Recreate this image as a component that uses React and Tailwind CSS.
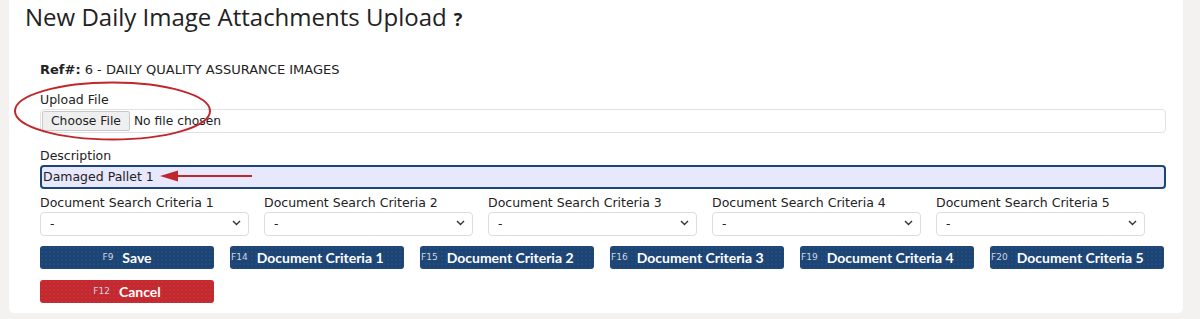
import React from "react";

const body = { fontFamily: '"DejaVu Sans", Verdana, sans-serif' };

function Btn({ fk, label, red, center }) {
  return (
    <button
      className={
        "h-[23px] w-[174px] rounded-[3px] flex items-center text-white font-bold text-[14px] bg-[radial-gradient(rgba(255,255,255,0.08)_0.6px,transparent_0.8px)] bg-[length:4px_4px] " +
        (red ? "bg-[#c4292f] justify-center" : "bg-[#1c4475] ") +
        (center ? " justify-center" : " pl-[1px]")
      }
      style={{ fontFamily: 'Lato, sans-serif' }}
    >
      <span className="text-[9px] font-normal mr-[9px] text-[#cfd6e0]" style={body}>{fk}</span>
      <span>{label}</span>
    </button>
  );
}

function Sel({ n }) {
  return (
    <div className="flex flex-col">
      <div className="text-[12.5px] leading-[15px] text-[#222] mb-[1px]">Document Search Criteria {n}</div>
      <div className="relative w-[209px]">
        <select className="appearance-none w-full h-[24px] rounded-[4px] border border-[#dcdcdc] bg-white pl-[9px] text-[12px] text-[#222] outline-none" style={body}>
          <option>-</option>
        </select>
        <svg className="absolute right-[8px] top-[9px]" width="9" height="6" viewBox="0 0 9 6">
          <path d="M1 1 L4.5 4.5 L8 1" fill="none" stroke="#333" strokeWidth="1.4" />
        </svg>
      </div>
    </div>
  );
}

export default function App() {
  return (
    <div className="bg-[#f3f2f1] h-[319px] pl-[9px] pr-[17px]" style={body}>
      <div className="relative bg-white h-[313px] rounded-b-[5px] pl-[31px]">
        <div className="flex items-baseline -ml-[15px] pt-[1px] h-[32px]">
          <h1 className="text-[24px] leading-[32px] text-[#222]" style={{ fontFamily: '"Open Sans", sans-serif' }}>
            New Daily Image Attachments Upload
          </h1>
          <span className="ml-[7px] text-[18px] font-bold text-[#222]" style={{ fontFamily: '"Open Sans", sans-serif' }}>?</span>
        </div>

        <div className="mt-[30px] text-[13px] leading-[15px] text-[#222]">
          <span className="font-bold">Ref#:</span> 6 - DAILY QUALITY ASSURANCE IMAGES
        </div>

        <div className="mt-[15px] text-[12.5px] leading-[15px] text-[#222]">Upload File</div>
        <div className="mt-[2px] w-[1126px] h-[24px] rounded-[4px] border border-[#e2e2e2] flex items-center pl-[1px] text-[12.3px] text-[#222]">
          <span className="h-[20px] px-[8px] flex items-center bg-[#efefef] border border-[#c8c8c8] rounded-[2px] text-[#222]">Choose File</span>
          <span className="ml-[4px]">No file chosen</span>
        </div>

        <div className="mt-[15px] text-[12.5px] leading-[15px] text-[#222]">Description</div>
        <div className="mt-[2px] w-[1126px] h-[24px] rounded-[4px] border-2 border-[#1c4475] bg-[#e8e8fc] flex items-center pl-[1px] text-[12.5px] text-[#222]">
          Damaged Pallet 1
        </div>

        <div className="mt-[6px] flex gap-[15px]">
          <Sel n={1} />
          <Sel n={2} />
          <Sel n={3} />
          <Sel n={4} />
          <Sel n={5} />
        </div>

        <div className="mt-[10px] flex gap-[16px]">
          <Btn fk="F9" label="Save" center />
          <Btn fk="F14" label="Document Criteria 1" />
          <Btn fk="F15" label="Document Criteria 2" />
          <Btn fk="F16" label="Document Criteria 3" />
          <Btn fk="F19" label="Document Criteria 4" />
          <Btn fk="F20" label="Document Criteria 5" />
        </div>
        <div className="mt-[11px]">
          <Btn fk="F12" label="Cancel" red center />
        </div>

        <svg className="absolute left-0 top-0 pointer-events-none" width="1180" height="313">
          <ellipse cx="103.5" cy="111" rx="97.5" ry="28.5" fill="none" stroke="#c0272d" strokeWidth="2" />
          <line x1="166" y1="176" x2="243" y2="176" stroke="#c0272d" strokeWidth="2" />
          <polygon points="151,176 169,170.5 169,181.5" fill="#c0272d" />
        </svg>
      </div>
    </div>
  );
}
